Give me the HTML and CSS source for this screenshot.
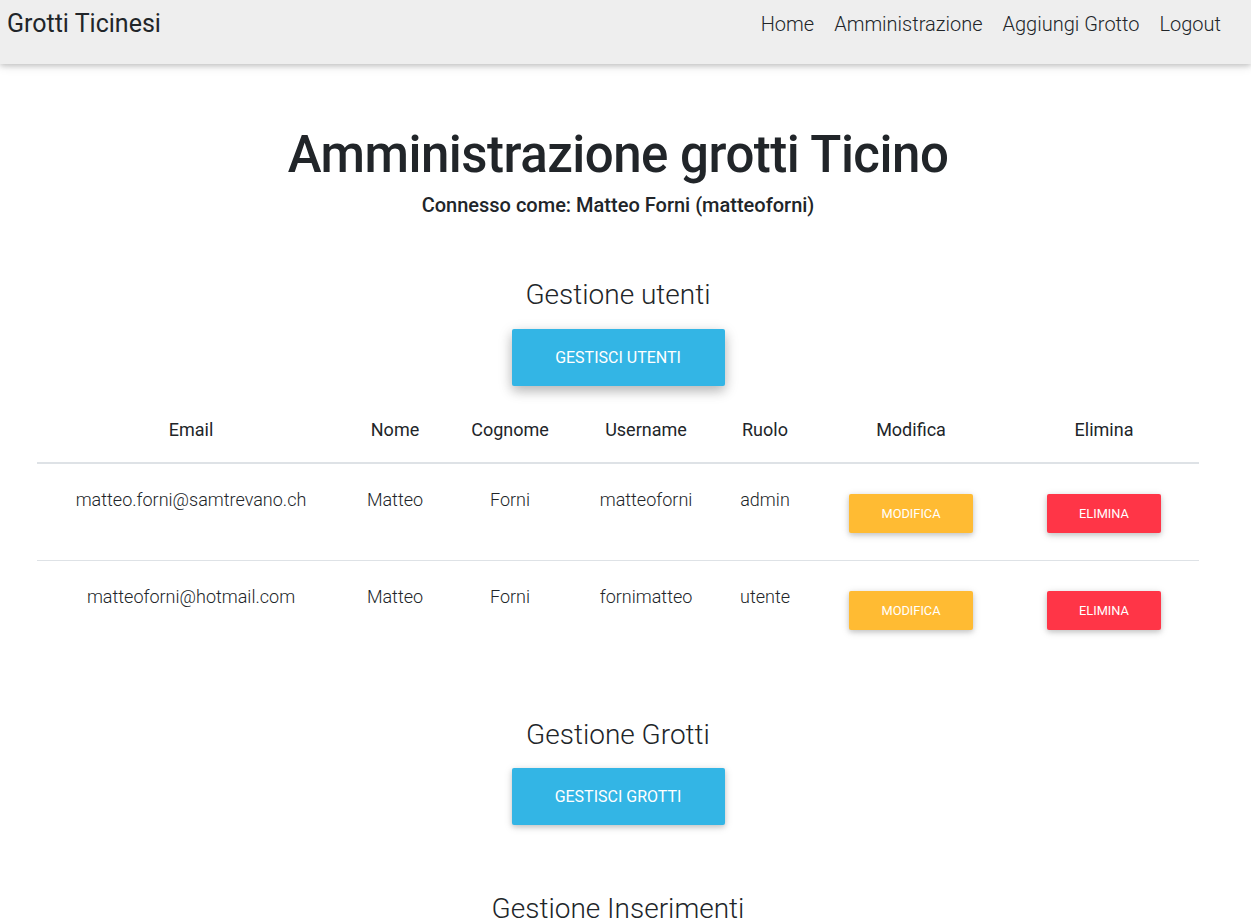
FILE: index.html
```html
<!DOCTYPE html>
<html lang="it">
<head>
<meta charset="utf-8">
<title>Amministrazione grotti Ticino</title>
<link rel="stylesheet" href="styles.css">
</head>
<body>
<nav class="navbar">
  <a class="brand" href="#">Grotti Ticinesi</a>
  <ul class="nav-links">
    <li><a href="#">Home</a></li>
    <li><a href="#">Amministrazione</a></li>
    <li><a href="#">Aggiungi Grotto</a></li>
    <li><a href="#">Logout</a></li>
  </ul>
</nav>
<main class="content">
  <h1 class="title">Amministrazione grotti Ticino</h1>
  <p class="subtitle">Connesso come: Matteo Forni (matteoforni)</p>

  <section class="section">
    <h2 class="section-title">Gestione utenti</h2>
    <button class="btn-lg btn-info btn-hover">Gestisci utenti</button>
    <table class="users">
      <colgroup>
        <col class="c-email"><col class="c-nome"><col class="c-cognome"><col class="c-user"><col class="c-ruolo"><col class="c-mod"><col class="c-del">
      </colgroup>
      <thead>
        <tr><th>Email</th><th>Nome</th><th>Cognome</th><th>Username</th><th>Ruolo</th><th>Modifica</th><th>Elimina</th></tr>
      </thead>
      <tbody>
        <tr>
          <td>matteo.forni@samtrevano.ch</td><td>Matteo</td><td>Forni</td><td>matteoforni</td><td>admin</td>
          <td><button class="btn-sm btn-warning">Modifica</button></td>
          <td><button class="btn-sm btn-danger">Elimina</button></td>
        </tr>
        <tr>
          <td>matteoforni@hotmail.com</td><td>Matteo</td><td>Forni</td><td>fornimatteo</td><td>utente</td>
          <td><button class="btn-sm btn-warning">Modifica</button></td>
          <td><button class="btn-sm btn-danger">Elimina</button></td>
        </tr>
      </tbody>
    </table>
  </section>

  <section class="section">
    <h2 class="section-title">Gestione Grotti</h2>
    <button class="btn-lg btn-info">Gestisci grotti</button>
  </section>

  <section class="section section-last">
    <h2 class="section-title">Gestione Inserimenti</h2>
  </section>
</main>
</body>
</html>
```

FILE: styles.css
```css
* { box-sizing: border-box; }
html, body { margin: 0; padding: 0; }
body {
  font-family: Roboto, "Noto Sans", sans-serif;
  color: #212529;
  background: #fff;
  font-weight: 300;
}
a { color: inherit; text-decoration: none; }

.navbar {
  height: 64px;
  background: #eeeeee;
  display: flex;
  justify-content: space-between;
  align-items: flex-start;
  padding: 8px 20px 0 7px;
  box-shadow: 0 2px 5px 0 rgba(0,0,0,.16), 0 2px 10px 0 rgba(0,0,0,.12);
  position: relative;
  z-index: 2;
}
.brand {
  font-size: 25px;
  font-weight: 400;
  line-height: 32px;
}
.nav-links {
  list-style: none;
  margin: 0;
  padding: 0;
  display: flex;
}
.nav-links a {
  display: block;
  font-size: 20px;
  line-height: 32px;
  padding: 0 10px;
  font-weight: 300;
}

.content {
  display: flex;
  flex-direction: column;
  align-items: center;
  padding: 0 52px 0 37px;
}
.title {
  font-size: 51px;
  font-weight: 500;
  letter-spacing: -0.5px;
  line-height: 1.2;
  margin: 60px 0 0;
}
.subtitle {
  font-size: 20px;
  font-weight: 500;
  line-height: 24px;
  margin: 8px 0 0;
}
.section {
  width: 100%;
  display: flex;
  flex-direction: column;
  align-items: center;
}
.section-title {
  font-size: 28px;
  font-weight: 300;
  line-height: 1.2;
  margin: 61px 0 17px;
}
.section-last .section-title { margin-top: 67px; }

button {
  font-family: Roboto, "Noto Sans", sans-serif;
  border: 0;
  color: #fff;
  text-transform: uppercase;
  border-radius: 2px;
  cursor: pointer;
  box-shadow: 0 2px 5px 0 rgba(0,0,0,.16), 0 2px 10px 0 rgba(0,0,0,.12);
}
.btn-lg {
  width: 213px;
  height: 57px;
  font-size: 16px;
  font-weight: 400;
}
.btn-hover {
  box-shadow: 0 5px 11px 0 rgba(0,0,0,.18), 0 4px 15px 0 rgba(0,0,0,.15);
}
.btn-sm {
  height: 39px;
  padding: 0 32px;
  font-size: 12.8px;
  font-weight: 400;
  margin: 8px 0 5px;
}
.btn-info { background: #33b5e5; }
.btn-warning { background: #ffbb33; }
.btn-danger { background: #ff3547; }

.users {
  width: 100%;
  border-collapse: collapse;
  margin-top: 11px;
  table-layout: fixed;
}
.c-email { width: 308px; }
.c-nome { width: 100px; }
.c-cognome { width: 130px; }
.c-user { width: 142px; }
.c-ruolo { width: 96px; }
.c-mod { width: 196px; }
.c-del { width: 190px; }
.users th {
  font-weight: 400;
  font-size: 18px;
  line-height: 27px;
  padding: 19px 8px 19px;
  border-bottom: 2px solid #dee2e6;
  text-align: center;
}
.users td {
  font-size: 18px;
  line-height: 27px;
  padding: 22px 8px 22px;
  text-align: center;
  vertical-align: top;
  border-top: 1px solid #dee2e6;
}
.users tbody tr:first-child td { border-top: 0; }
```
